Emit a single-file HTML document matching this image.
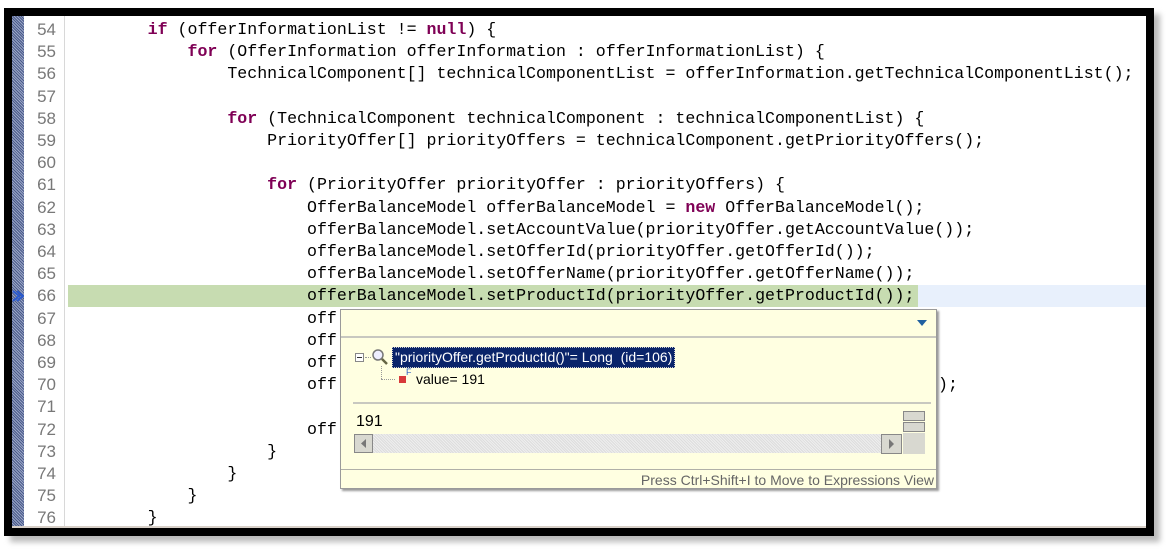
<!DOCTYPE html>
<html><head><meta charset="utf-8"><style>
body{margin:0;width:1166px;height:550px;background:#fff;position:relative;overflow:hidden;font-family:"Liberation Mono",monospace}
.shadow{position:absolute;left:10px;top:14px;width:1150px;height:528px;background:#bbb;filter:blur(3px)}
.frame{position:absolute;left:4px;top:8px;width:1150px;height:528px;background:#000}
.ed{position:absolute;left:12px;top:16px;width:1134px;height:512px;background:#fff;overflow:hidden}
.gut{position:absolute;left:0;top:0;width:12px;height:512px;background:repeating-linear-gradient(45deg,#4a5a8a 0 1px,#9aa6c6 1px 2px)}
.sep{position:absolute;left:52px;top:0;width:1px;height:512px;background:#d8d8d8}
.ln{position:absolute;left:10px;width:34px;text-align:right;color:#787878;font-family:"Liberation Sans",sans-serif;font-size:17px;height:22px;line-height:22px}
.cl{position:absolute;left:56px;white-space:pre;font-size:16.6px;height:22px;line-height:22px;color:#000}
.k{color:#7f0055;font-weight:bold}
.hl{position:absolute;left:56px;width:850px;height:22px;background:#c7dcb1}
.hb{position:absolute;left:906px;width:228px;height:22px;background:#e8f0fc}
.pop{position:absolute;left:340px;top:309px;width:595px;height:178px;background:#ffffe1;border:1px solid #9a9a9a;box-shadow:2px 2px 2px #999;font-family:"Liberation Sans",sans-serif}
.s{position:absolute;font-size:14px;white-space:pre}
</style></head><body>
<div class="shadow"></div>
<div class="frame"></div>
<div class="ed">
<div class="gut"></div>
<div class="sep"></div>
<div class="hl" style="top:269px"></div><div class="hb" style="top:269px"></div>
<svg style="position:absolute;left:0;top:273px" width="12" height="14"><path d="M1 2 L7 7 L1 12 M5 2 L11 7 L5 12" stroke="#2a5ad0" stroke-width="2" fill="none"/></svg>
<div class="ln" style="top:3px">54</div><div class="cl" style="top:3px">        <span class="k">if</span> (offerInformationList != <span class="k">null</span>) {</div>
<div class="ln" style="top:25.2px">55</div><div class="cl" style="top:25.2px">            <span class="k">for</span> (OfferInformation offerInformation : offerInformationList) {</div>
<div class="ln" style="top:47.4px">56</div><div class="cl" style="top:47.4px">                TechnicalComponent[] technicalComponentList = offerInformation.getTechnicalComponentList();</div>
<div class="ln" style="top:69.6px">57</div>
<div class="ln" style="top:91.8px">58</div><div class="cl" style="top:91.8px">                <span class="k">for</span> (TechnicalComponent technicalComponent : technicalComponentList) {</div>
<div class="ln" style="top:114px">59</div><div class="cl" style="top:114px">                    PriorityOffer[] priorityOffers = technicalComponent.getPriorityOffers();</div>
<div class="ln" style="top:136.2px">60</div>
<div class="ln" style="top:158.4px">61</div><div class="cl" style="top:158.4px">                    <span class="k">for</span> (PriorityOffer priorityOffer : priorityOffers) {</div>
<div class="ln" style="top:180.6px">62</div><div class="cl" style="top:180.6px">                        OfferBalanceModel offerBalanceModel = <span class="k">new</span> OfferBalanceModel();</div>
<div class="ln" style="top:202.8px">63</div><div class="cl" style="top:202.8px">                        offerBalanceModel.setAccountValue(priorityOffer.getAccountValue());</div>
<div class="ln" style="top:225px">64</div><div class="cl" style="top:225px">                        offerBalanceModel.setOfferId(priorityOffer.getOfferId());</div>
<div class="ln" style="top:247.2px">65</div><div class="cl" style="top:247.2px">                        offerBalanceModel.setOfferName(priorityOffer.getOfferName());</div>
<div class="ln" style="top:269.4px">66</div><div class="cl" style="top:269.4px">                        offerBalanceModel.setProductId(priorityOffer.getProductId());</div>
<div class="ln" style="top:291.6px">67</div><div class="cl" style="top:291.6px">                        off</div>
<div class="ln" style="top:313.8px">68</div><div class="cl" style="top:313.8px">                        off</div>
<div class="ln" style="top:336px">69</div><div class="cl" style="top:336px">                        off</div>
<div class="ln" style="top:358.2px">70</div><div class="cl" style="top:358.2px">                        off</div>
<div class="cl" style="top:358.2px;left:926px">);</div>
<div class="ln" style="top:380.4px">71</div>
<div class="ln" style="top:402.6px">72</div><div class="cl" style="top:402.6px">                        off</div>
<div class="ln" style="top:424.8px">73</div><div class="cl" style="top:424.8px">                    }</div>
<div class="ln" style="top:447px">74</div><div class="cl" style="top:447px">                }</div>
<div class="ln" style="top:469.2px">75</div><div class="cl" style="top:469.2px">            }</div>
<div class="ln" style="top:491.4px">76</div><div class="cl" style="top:491.4px">        }</div>
<div style="position:absolute;left:0;top:510px;width:1134px;height:2px;background:#d8d0c8"></div>
</div>
<div class="pop">
<svg style="position:absolute;left:576px;top:10px" width="10" height="6"><path d="M0 0 L10 0 L5 6Z" fill="#2060a0"/></svg>
<div style="position:absolute;left:0;top:26px;width:595px;height:2px;background:#c8c8c0"></div>
<div style="position:absolute;left:14px;top:43px;width:7px;height:7px;border:1px solid #888;background:#fff"><div style="position:absolute;left:1px;top:3px;width:5px;height:1px;background:#333"></div></div>
<div style="position:absolute;left:24px;top:47px;width:6px;border-top:1px dotted #999"></div>
<svg style="position:absolute;left:30px;top:38px" width="18" height="18"><circle cx="7" cy="7" r="5" fill="#eef" stroke="#777" stroke-width="1.5"/><path d="M11 11 L16 16" stroke="#664" stroke-width="2.5"/></svg>
<div class="s" style="left:51px;top:37px;height:19px;line-height:19px;padding:0 2px;background:#0a246a;color:#fff;border:1px dotted #ccc">"priorityOffer.getProductId()"= Long  (id=106)</div>
<div style="position:absolute;left:40px;top:56px;height:13px;border-left:1px dotted #999"></div>
<div style="position:absolute;left:40px;top:69px;width:14px;border-top:1px dotted #999"></div>
<div style="position:absolute;left:58px;top:66px;width:7px;height:7px;background:#d83a3a"></div>
<div style="position:absolute;left:65px;top:57px;font-size:9px;color:#3060c0;font-family:'Liberation Sans',sans-serif">F</div>
<div class="s" style="left:75px;top:61px">value= 191</div>
<div style="position:absolute;left:12px;top:92px;width:578px;height:2px;background:#c8c8c0"></div>
<div class="s" style="left:15px;top:103px;font-size:16px">191</div>
<div style="position:absolute;left:13px;top:124px;width:540px;height:19px;background:repeating-linear-gradient(45deg,#ddd 0 1px,#eee 1px 2px)"></div>
<div style="position:absolute;left:13px;top:124px;width:19px;height:19px;background:#d8d8d0;border:1px solid #888;box-sizing:border-box"><svg width="17" height="17"><path d="M11 4 L6 8.5 L11 13Z" fill="#777"/></svg></div>
<div style="position:absolute;left:540px;top:124px;width:21px;height:20px;background:#d8d8d0;border:1px solid #888;box-sizing:border-box"><svg width="19" height="18"><path d="M7 4 L12 9 L7 14Z" fill="#777"/></svg></div>
<div style="position:absolute;left:562px;top:101px;width:22px;height:10px;background:#d8d8d0;border:1px solid #888;box-sizing:border-box"></div>
<div style="position:absolute;left:562px;top:112px;width:22px;height:10px;background:#d8d8d0;border:1px solid #888;box-sizing:border-box"></div>
<div style="position:absolute;left:562px;top:123px;width:22px;height:21px;background:#d8d8d0"></div>
<div style="position:absolute;left:0;top:159px;width:595px;height:1px;background:#b0b0a8"></div>
<div class="s" style="right:2px;top:162px;font-size:14px;color:#666">Press Ctrl+Shift+I to Move to Expressions View</div>
</div>
</body></html>
